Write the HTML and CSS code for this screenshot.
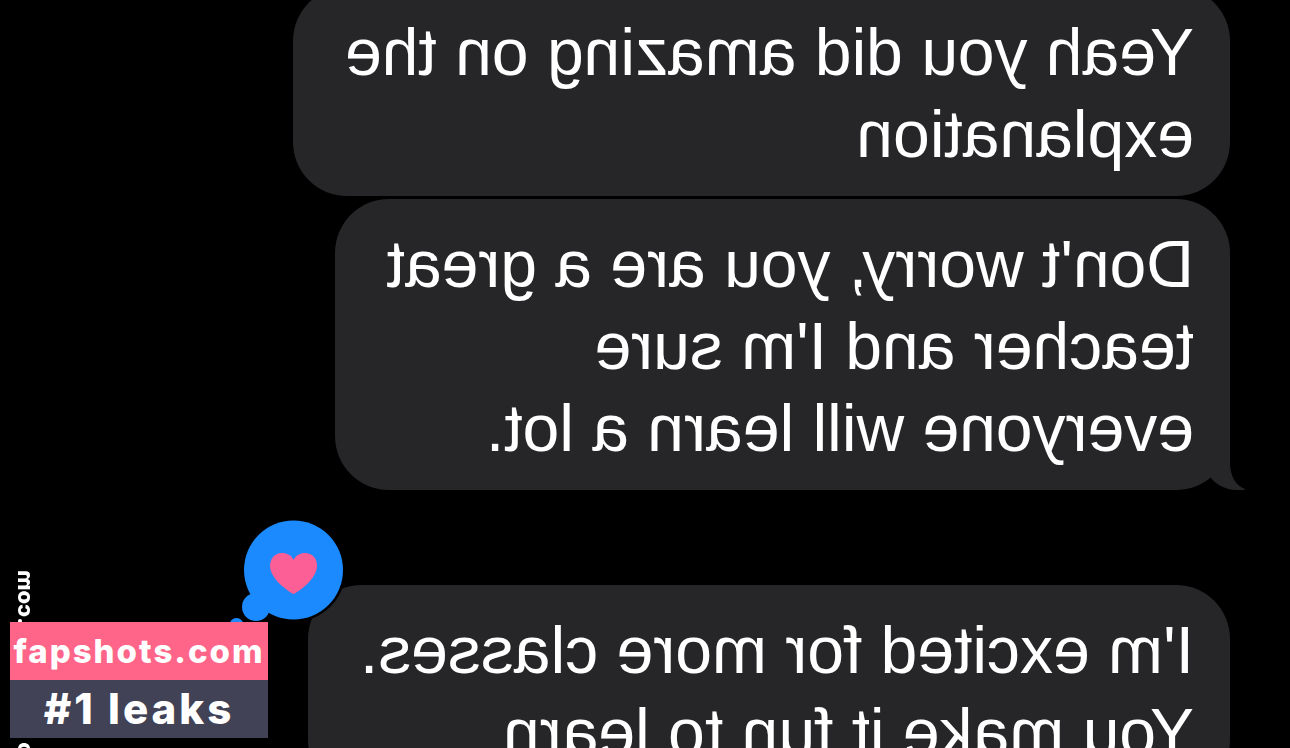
FILE: index.html
```
<!DOCTYPE html>
<html lang="en">
<head>
    <meta charset="UTF-8">
    <meta name="viewport" content="width=device-width, initial-scale=1.0">
    <title>Messages</title>
    <link rel="stylesheet" href="styles.css">
</head>
<body>

    <!-- the whole conversation is shown mirrored -->
    <main class="chat">
        <p class="bubble">Yeah you did amazing on the<br>explanation</p>
        <p class="bubble bubble-last">Don't worry, you are a great<br>teacher and I'm sure<br>everyone will learn a lot.
            <svg class="tail" viewBox="0 0 36 60" aria-hidden="true">
                <path d="M16 0V33C16 45 11 56 0 59.500C13 62 27 58 35 48L34 0Z"/>
            </svg>
        </p>
        <div class="bubble">I'm excited for more classes.<br>You make it fun to learn
            <svg class="reaction" viewBox="0 0 120 120" role="img" aria-label="Loved">
                <circle cx="55.500" cy="53" r="52" fill="#000"/>
                <g fill="#1b8aff">
                    <circle cx="55.500" cy="53" r="49.500"/>
                    <circle cx="93" cy="90" r="14"/>
                    <circle cx="112.500" cy="108" r="7"/>
                </g>
                <path fill="#fb5f95" d="M55.500 77C51 75 32 62 32 49C32 41 37 36 44 36C49 36 53 38 55.500 43C58 38 62 36 67 36C74 36 79 41 79 49C79 62 60 75 55.500 77Z"/>
            </svg>
        </div>
        <div class="side-mark"><span>.com</span><span>o</span></div>
    </main>

    <aside class="badge">
        <div class="badge-site">fapshots.com</div>
        <div class="badge-rank">#1 leaks</div>
    </aside>

</body>
</html>
```
FILE: styles.css
```
body {
    margin: 0;
    background: #000;
    color: #fff;
    font-family: "Liberation Sans", Arial, sans-serif;
    overflow: hidden;
}
.chat {
    position: relative;
    box-sizing: border-box;
    height: 100vh;
    padding-left: 60px;
    overflow: hidden;
    transform: scaleX(-1);
}
.bubble {
    position: relative;
    width: fit-content;
    margin: 3px 0 0;
    padding: 24px 52px 21px 36px;
    border-radius: 54px;
    background: #262628;
    font-size: 66px;
    line-height: 82px;
    white-space: nowrap;
}
.bubble:first-child {
    margin-top: -13px;
}
.bubble-last {
    margin-bottom: 95px;
}
.tail {
    position: absolute;
    left: -16px;
    bottom: 0;
    width: 36px;
    height: 60px;
    fill: #262628;
}
.reaction {
    position: absolute;
    top: -68px;
    right: -79px;
    width: 120px;
    height: 120px;
}
.side-mark {
    position: absolute;
    right: 14px;
    bottom: -8px;
    display: flex;
    gap: 118px;
    font-family: Inter, "Liberation Sans", sans-serif;
    font-size: 22px;
    font-weight: 800;
    line-height: 24px;
    writing-mode: vertical-rl;
}
.side-mark span {
    transform: rotate(180deg);
}
.badge {
    position: fixed;
    left: 10px;
    bottom: 10px;
    width: 258px;
    font-family: Inter, "Liberation Sans", sans-serif;
    font-weight: 800;
    line-height: 58px;
    text-align: center;
    white-space: nowrap;
    letter-spacing: 2px;
}
.badge-site {
    background: #ff6489;
    font-size: 33px;
}
.badge-rank {
    background: #414256;
    font-size: 42px;
    letter-spacing: 3px;
}
```
